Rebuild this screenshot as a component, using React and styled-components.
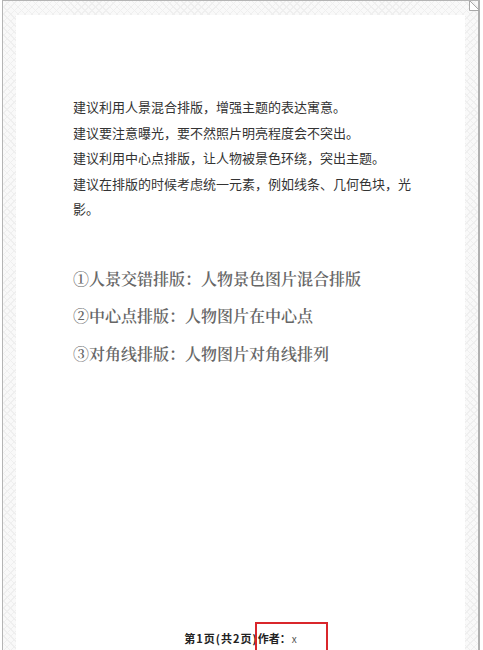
import * as React from "react";
import styled, { createGlobalStyle } from "styled-components";

const GlobalStyle = createGlobalStyle`
  html, body {
    margin: 0;
    padding: 0;
    background: #ffffff;
  }
  body {
    font-family: "Noto Sans CJK SC", "Noto Sans", sans-serif;
  }
`;

// styles
const Viewport = styled.div`
  width: 483px;
  height: 650px;
  overflow: hidden;
  background: #ffffff;
`;

const Frame = styled.div`
  position: relative;
  margin-left: 2px;
  width: 478px;
  height: 700px;
  padding: 14px 13px 0 13px;
  box-sizing: border-box;
  border-left: 1px solid #b4b4b4;
  border-right: 2px solid #b0b0b0;
  border-top: 1px solid #b4b4b4;
  background-color: #f9f9f9;
  background-image:
    repeating-linear-gradient(45deg, #efefef 0 1px, transparent 1px 5px),
    repeating-linear-gradient(-45deg, #efefef 0 1px, transparent 1px 5px);
`;

const Fold = styled.svg`
  position: absolute;
  top: -1px;
  right: -2px;
  width: 11px;
  height: 11px;
`;

const Sheet = styled.div`
  display: flex;
  flex-direction: column;
  height: 650px;
  padding: 79px 0 18px 57px;
  box-sizing: border-box;
  background: #ffffff;
`;

const Notes = styled.div`
  width: 344px;
  font-size: 13px;
  line-height: 25.5px;
  color: #333333;
  word-break: break-all;
`;

const Note = styled.p`
  margin: 0;
`;

const Methods = styled.div`
  margin-top: 38px;
  font-family: "Noto Serif CJK SC", "Noto Sans CJK SC", serif;
  font-size: 16px;
  line-height: 37.5px;
  color: #666666;
  font-weight: 600;
`;

const Method = styled.p`
  margin: 0;
`;

const Footer = styled.div`
  margin-top: auto;
  margin-left: -57px;
  text-align: center;
  font-size: 11px;
  line-height: 16px;
  font-weight: 700;
  color: #222222;
`;

const PageNo = styled.span`
  letter-spacing: 1px;
`;

const Author = styled.span`
  position: relative;

  &::after {
    content: "";
    position: absolute;
    left: -3px;
    top: -8px;
    width: 73px;
    height: 34px;
    box-sizing: border-box;
    border: 2px solid #d9262b;
  }
`;

const AuthorName = styled.span`
  font-weight: 400;
  color: #555555;
  font-size: 10px;
  margin-left: 1px;
`;

const notes = [
  "建议利用人景混合排版，增强主题的表达寓意。",
  "建议要注意曝光，要不然照片明亮程度会不突出。",
  "建议利用中心点排版，让人物被景色环绕，突出主题。",
  "建议在排版的时候考虑统一元素，例如线条、几何色块，光影。",
];

const methods = [
  "①人景交错排版：人物景色图片混合排版",
  "②中心点排版：人物图片在中心点",
  "③对角线排版：人物图片对角线排列",
];

// markup
const App = () => {
  return (
    <Viewport>
      <GlobalStyle />
      <Frame>
        <Fold viewBox="0 0 11 11">
          <path d="M0 0.5 L0.5 0.5 L10.5 10.5 L10.5 11" fill="#ffffff" />
          <path d="M0.5 0.5 L0.5 10.5 L10.5 10.5 Z" fill="#ffffff" stroke="#a8a8a8" strokeWidth="1" />
        </Fold>
        <Sheet>
          <Notes>
            {notes.map((n) => (
              <Note key={n}>{n}</Note>
            ))}
          </Notes>
          <Methods>
            {methods.map((m) => (
              <Method key={m}>{m}</Method>
            ))}
          </Methods>
          <Footer>
            <PageNo>第1页(共2页)</PageNo>
            <Author>
              作者：<AuthorName>x</AuthorName>
            </Author>
          </Footer>
        </Sheet>
      </Frame>
    </Viewport>
  );
};

export default App;
